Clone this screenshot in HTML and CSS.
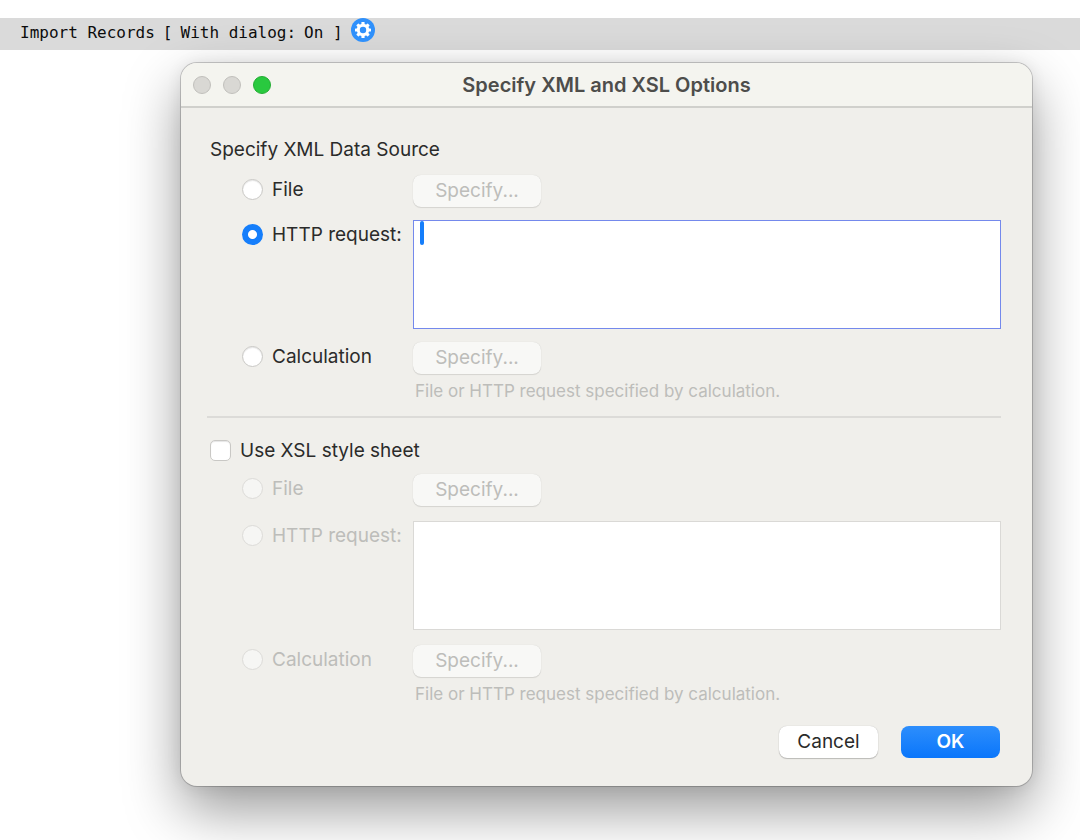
FILE: index.html
```html
<!DOCTYPE html>
<html lang="en">
<head>
<meta charset="utf-8">
<meta name="viewport" content="width=device-width, initial-scale=1">
<title>Specify XML and XSL Options</title>
<link rel="stylesheet" href="styles.css">
</head>
<body>
<header class="step">
  <span>Import Records</span>
  <span>[</span>
  <span>With dialog:</span>
  <span>On ]</span>
  <button class="gear" type="button" aria-label="Step options">
    <svg viewBox="0 0 24 24" width="24" height="24" aria-hidden="true">
      <circle cx="12" cy="12" r="12" fill="#2f90fb"/>
      <g fill="#fff">
        <rect x="10.4" y="4" width="3.2" height="16" rx=".6"/>
        <rect x="10.4" y="4" width="3.2" height="16" rx=".6" transform="rotate(45 12 12)"/>
        <rect x="10.4" y="4" width="3.2" height="16" rx=".6" transform="rotate(90 12 12)"/>
        <rect x="10.4" y="4" width="3.2" height="16" rx=".6" transform="rotate(135 12 12)"/>
        <circle cx="12" cy="12" r="6.2"/>
      </g>
      <circle cx="12" cy="12" r="3.2" fill="#2f90fb"/>
    </svg>
  </button>
</header>
<main class="dialog" role="dialog" aria-labelledby="title">
  <div class="titlebar">
    <div class="lights">
      <button class="light" type="button" aria-label="Close" disabled></button>
      <button class="light" type="button" aria-label="Minimize" disabled></button>
      <button class="light zoom" type="button" aria-label="Zoom"></button>
    </div>
    <h1 class="title" id="title">Specify XML and XSL Options</h1>
  </div>
  <form class="content">
    <h2 class="heading" id="source">Specify XML Data Source</h2>
    <div class="options" role="radiogroup" aria-labelledby="source">
      <label class="choice"><input class="radio" type="radio" name="xml">File</label>
      <button class="button specify" type="button" disabled>Specify...</button>
      <label class="choice"><input class="radio" type="radio" name="xml" checked>HTTP request:</label>
      <div class="field">
        <textarea class="request active" aria-label="XML HTTP request"></textarea>
        <span class="caret"></span>
      </div>
      <label class="choice"><input class="radio" type="radio" name="xml">Calculation</label>
      <div>
        <button class="button specify" type="button" disabled>Specify...</button>
        <p class="note">File or HTTP request specified by calculation.</p>
      </div>
    </div>
    <hr class="rule">
    <label class="toggle"><input class="check" type="checkbox">Use XSL style sheet</label>
    <div class="options sheet">
      <label class="choice off"><input class="radio" type="radio" name="xsl" disabled>File</label>
      <button class="button specify" type="button" disabled>Specify...</button>
      <label class="choice off"><input class="radio" type="radio" name="xsl" disabled>HTTP request:</label>
      <div class="field">
        <textarea class="request" aria-label="XSL HTTP request" disabled></textarea>
      </div>
      <label class="choice off"><input class="radio" type="radio" name="xsl" disabled>Calculation</label>
      <div>
        <button class="button specify" type="button" disabled>Specify...</button>
        <p class="note">File or HTTP request specified by calculation.</p>
      </div>
    </div>
    <div class="actions">
      <button class="button" type="button">Cancel</button>
      <button class="button primary" type="button">OK</button>
    </div>
  </form>
</main>
</body>
</html>
```
FILE: styles.css
```css
* { box-sizing: border-box; }
body {
  margin: 0;
  padding: 18px 0 54px;
  background: #fff;
  color: #2b2b2a;
  font: 19px/28px Inter, "Liberation Sans", sans-serif;
}
button, textarea { font: inherit; color: inherit; }
.step {
  display: flex;
  gap: 8px;
  height: 32px;
  padding: 0 20px;
  background: #dadada;
  color: #0c0c0c;
  font: 16px/30px "DejaVu Sans Mono", monospace;
}
.gear {
  width: 24px;
  height: 24px;
  padding: 0;
  border: 0;
  background: none;
}
.gear svg { display: block; }
.dialog {
  margin: 13px 48px 0 181px;
  border-radius: 16px;
  background: #f0efeb;
  box-shadow: 0 0 0 1px #00000030, 0 24px 56px #00000066, 0 0 16px #00000014;
}
.titlebar {
  display: grid;
  grid-template-columns: 1fr auto 1fr;
  align-items: center;
  height: 45px;
  padding: 0 12px;
  border-bottom: 2px solid #d0d0cc;
  border-radius: 16px 16px 0 0;
  background: #f4f4ef;
}
.lights { display: flex; gap: 12px; }
.light {
  width: 18px;
  height: 18px;
  padding: 0;
  border: 1px solid #c1c0bc;
  border-radius: 50%;
  background: #d9d8d4;
}
.zoom { border-color: #24ad34; background: #29c93f; }
.title {
  margin: 0;
  color: #4d4d4b;
  font-size: 20px;
  font-weight: 600;
}
.content { padding: 28px 31px 28px 26px; }
.heading {
  margin: 0 3px 11px;
  font-size: 19px;
  font-weight: 400;
}
.options {
  display: grid;
  grid-template-columns: 206px 1fr;
  row-gap: 13px;
  align-items: start;
}
.sheet { row-gap: 15px; }
.choice, .toggle {
  display: flex;
  align-items: flex-start;
  gap: 9px;
  line-height: 30px;
  white-space: nowrap;
}
.choice { padding-left: 35px; }
.toggle { margin: 0 3px 8px; }
.radio, .check {
  appearance: none;
  flex: none;
  width: 21px;
  height: 21px;
  margin: 4px 0 0;
  border: 1px solid #c9c8c5;
  background: #fff;
  box-shadow: inset 0 1px 1px #0000001a;
}
.radio { border-radius: 50%; }
.check { border-radius: 5px; }
.radio:checked {
  border: 0;
  background: radial-gradient(circle, #fff 4px, #157efb 5px);
  box-shadow: none;
}
.radio:disabled { border-color: #dcdbd8; background: #f6f6f4; box-shadow: none; }
.off { color: #bdbdba; }
.button {
  display: block;
  min-width: 99px;
  height: 32px;
  padding: 0 16px;
  border: 0;
  border-radius: 8px;
  background: #fff;
  box-shadow: 0 0 1px #00000040, 0 1px 1px #00000033;
}
.specify {
  width: 128px;
  background: #f8f8f6;
  color: #bdbdba;
  box-shadow: 0 0 1px #00000026, 0 1px 1px #0000001a;
}
.field { position: relative; }
.request {
  display: block;
  width: 100%;
  height: 109px;
  padding: 2px 6px;
  border: 1px solid #dad9d6;
  border-radius: 0;
  background: #fff;
  outline: 0;
  resize: none;
}
.active { border-color: #7489ec; }
.caret {
  position: absolute;
  top: 1px;
  left: 7px;
  width: 4px;
  height: 24px;
  border-radius: 2px;
  background: #157efb;
}
.note {
  margin: 5px 2px 0;
  color: #bdbdba;
  font-size: 17px;
  line-height: 24px;
}
.rule {
  height: 2px;
  margin: 13px 0 18px;
  border: 0;
  background: #dcdbd8;
}
.actions {
  display: flex;
  justify-content: flex-end;
  gap: 23px;
  margin-top: 20px;
  padding-right: 1px;
}
.primary {
  background: linear-gradient(#2d8efc, #0a76fb);
  color: #fff;
  font-weight: 600;
  box-shadow: none;
}
```
